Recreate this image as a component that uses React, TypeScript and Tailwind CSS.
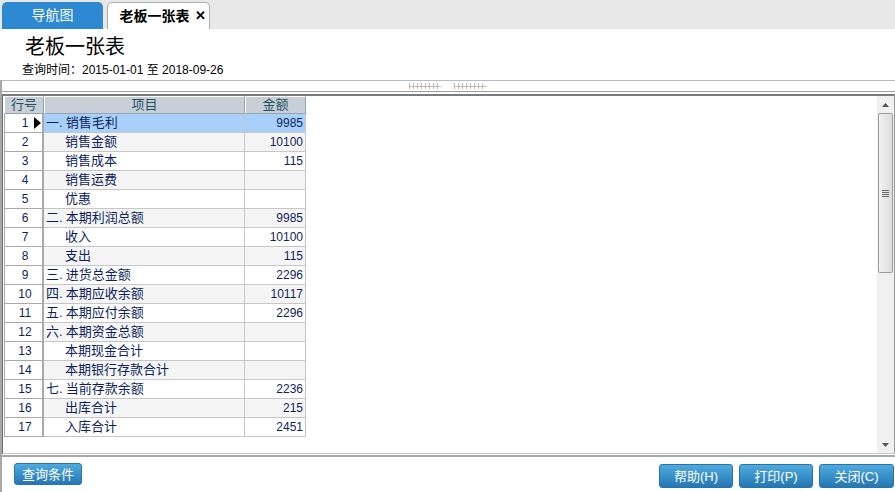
import React from 'react'

type Row = { no: number; prefix?: string; label: string; amount: string }

const rows: Row[] = [
  { no: 1, prefix: '一.', label: '销售毛利', amount: '9985' },
  { no: 2, label: '销售金额', amount: '10100' },
  { no: 3, label: '销售成本', amount: '115' },
  { no: 4, label: '销售运费', amount: '' },
  { no: 5, label: '优惠', amount: '' },
  { no: 6, prefix: '二.', label: '本期利润总额', amount: '9985' },
  { no: 7, label: '收入', amount: '10100' },
  { no: 8, label: '支出', amount: '115' },
  { no: 9, prefix: '三.', label: '进货总金额', amount: '2296' },
  { no: 10, prefix: '四.', label: '本期应收余额', amount: '10117' },
  { no: 11, prefix: '五.', label: '本期应付余额', amount: '2296' },
  { no: 12, prefix: '六.', label: '本期资金总额', amount: '' },
  { no: 13, label: '本期现金合计', amount: '' },
  { no: 14, label: '本期银行存款合计', amount: '' },
  { no: 15, prefix: '七.', label: '当前存款余额', amount: '2236' },
  { no: 16, label: '出库合计', amount: '215' },
  { no: 17, label: '入库合计', amount: '2451' },
]

const font = "font-['Liberation_Sans','Noto_Sans_CJK_SC',sans-serif]"

function Grip() {
  const ticks = Array.from({ length: 8 })
  return (
    <svg width="34" height="6" viewBox="0 0 34 6">
      {ticks.map((_, i) => (
        <g key={i} stroke="#c4bcb0" strokeWidth="1">
          <line x1={i * 4 + 0.5} y1="0" x2={i * 4 + 0.5} y2="6" />
          <line x1={i * 4} y1="3.5" x2={i * 4 + 4} y2="3.5" />
        </g>
      ))}
    </svg>
  )
}

function BlueButton({ children, className }: { children: React.ReactNode; className: string }) {
  return (
    <button
      type="button"
      className={`flex items-center justify-center rounded-[3px] border border-[#2a72a8] bg-gradient-to-b from-[#4eaadf] to-[#2477b3] text-[13px] leading-none text-white ${className}`}
    >
      {children}
    </button>
  )
}

export default function App() {
  return (
    <div className={`relative flex h-[492px] w-[895px] flex-col overflow-hidden bg-white ${font}`}>
      {/* tabs */}
      <div className="flex h-[29px] shrink-0 items-end bg-[#e8e8e8] pl-[2px]">
        <div className="flex h-[27px] w-[101px] items-center justify-center rounded-t-[5px] bg-[#2d89d1] text-[14px] text-white">
          导航图
        </div>
        <div className="ml-[4px] flex h-[27px] w-[103px] items-center justify-center gap-[5px] rounded-t-[5px] border border-b-0 border-[#aeaeae] bg-white pl-[8px] text-[14px] font-bold text-black">
          <span>老板一张表</span>
          <span className="text-[13px]">✕</span>
        </div>
      </div>

      {/* title */}
      <div className="h-[51px] shrink-0 pl-[25px]">
        <div className="mt-[6px] h-[24px] text-[20px] leading-[24px] text-black">老板一张表</div>
        <div className="ml-[-3px] mt-[4px] text-[12px] leading-[14px] text-black">
          查询时间：2015-01-01 至 2018-09-26
        </div>
      </div>

      <div className="flex flex-1 flex-col border-l-2 border-[#a8a8a8]">
        {/* splitter */}
        <div className="flex h-[12px] shrink-0 items-center justify-center gap-[11px] border-t border-b border-t-[#b6bdc8] border-b-[#a0a0a0] bg-white">
          <Grip />
          <Grip />
        </div>

        {/* grid panel */}
        <div className="mt-[2px] flex h-[360px] shrink-0 border-t-2 border-r border-b border-l border-t-[#7c7c7c] border-r-[#9a9a9a] border-b-[#c8c8c8] border-l-[#6e6e6e]">
          <div className="flex-1 pl-[1px]">
            {/* header */}
            <div className="flex h-[18px] text-[13px] leading-[16px] text-[#1f5060]">
              <div className="w-[40px] border-t border-l border-r border-b border-t-white border-l-white border-r-[#9aa2ad] border-b-[#9aa2ad] bg-[#c7cfd9] text-center">
                行号
              </div>
              <div className="w-[201px] border-t border-l border-r border-b border-t-white border-l-white border-r-[#9aa2ad] border-b-[#9aa2ad] bg-[#c7cfd9] text-center">
                项目
              </div>
              <div className="w-[61px] border-t border-l border-r border-b border-t-white border-l-white border-r-[#9aa2ad] border-b-[#9aa2ad] bg-[#c7cfd9] text-center">
                金额
              </div>
            </div>
            {rows.map((r) => {
              const selected = r.no === 1
              const bg = selected ? 'bg-[#a7d1fb]' : r.no % 2 === 0 ? 'bg-[#f5f5f5]' : 'bg-white'
              return (
                <div key={r.no} className="flex h-[19px] text-[13px] leading-[18px] text-[#0d1f5e]">
                  <div className="relative w-[40px] border-r-2 border-b border-l border-r-[#a9a9a9] border-b-[#a9a9a9] border-l-[#a9a9a9] bg-white pl-[3px] text-center text-[12px]">
                    {r.no}
                    {selected && (
                      <svg className="absolute top-[3px] right-[1px]" width="7" height="12" viewBox="0 0 7 12">
                        <path d="M0 0 L7 6 L0 12 Z" fill="#000" />
                      </svg>
                    )}
                  </div>
                  <div className={`w-[201px] border-r border-b border-[#c6c6c6] ${bg} ${r.prefix ? 'pl-[2px]' : 'pl-[21px]'} whitespace-nowrap`}>
                    {r.prefix && <span className="mr-[3px]">{r.prefix}</span>}
                    {r.label}
                  </div>
                  <div className={`w-[61px] border-r border-b border-[#c6c6c6] ${bg} pr-[2px] text-right text-[12px]`}>
                    {r.amount}
                  </div>
                </div>
              )
            })}
          </div>

          {/* scrollbar */}
          <div className="flex w-[17px] flex-col items-center bg-[#f0f0f0]">
            <div className="flex h-[17px] w-full items-center justify-center">
              <svg width="7" height="4" viewBox="0 0 7 4">
                <path d="M0 4 L3.5 0 L7 4 Z" fill="#555" />
              </svg>
            </div>
            <div className="flex h-[160px] w-[15px] items-center justify-center rounded-[2px] border border-[#9c9c9c] bg-gradient-to-r from-[#f2f2f2] to-[#dcdcdc]">
              <div className="flex flex-col gap-[1px]">
                <div className="h-px w-[7px] bg-[#666]" />
                <div className="h-px w-[7px] bg-[#666]" />
                <div className="h-px w-[7px] bg-[#666]" />
                <div className="h-px w-[7px] bg-[#666]" />
              </div>
            </div>
            <div className="flex-1" />
            <div className="flex h-[17px] w-full items-center justify-center">
              <svg width="7" height="4" viewBox="0 0 7 4">
                <path d="M0 0 L3.5 4 L7 0 Z" fill="#555" />
              </svg>
            </div>
          </div>
        </div>

        {/* footer */}
        <div className="mt-[1px] flex flex-1 items-start border-t-2 border-[#a8a8a8] pt-[6px] pl-[12px]">
          <BlueButton className="h-[22px] w-[68px]">查询条件</BlueButton>
          <div className="flex-1" />
          <div className="mt-[1px] flex gap-[6px] pr-[1px]">
            <BlueButton className="h-[24px] w-[74px]">帮助(H)</BlueButton>
            <BlueButton className="h-[24px] w-[74px]">打印(P)</BlueButton>
            <BlueButton className="h-[24px] w-[75px]">关闭(C)</BlueButton>
          </div>
        </div>
      </div>
    </div>
  )
}
